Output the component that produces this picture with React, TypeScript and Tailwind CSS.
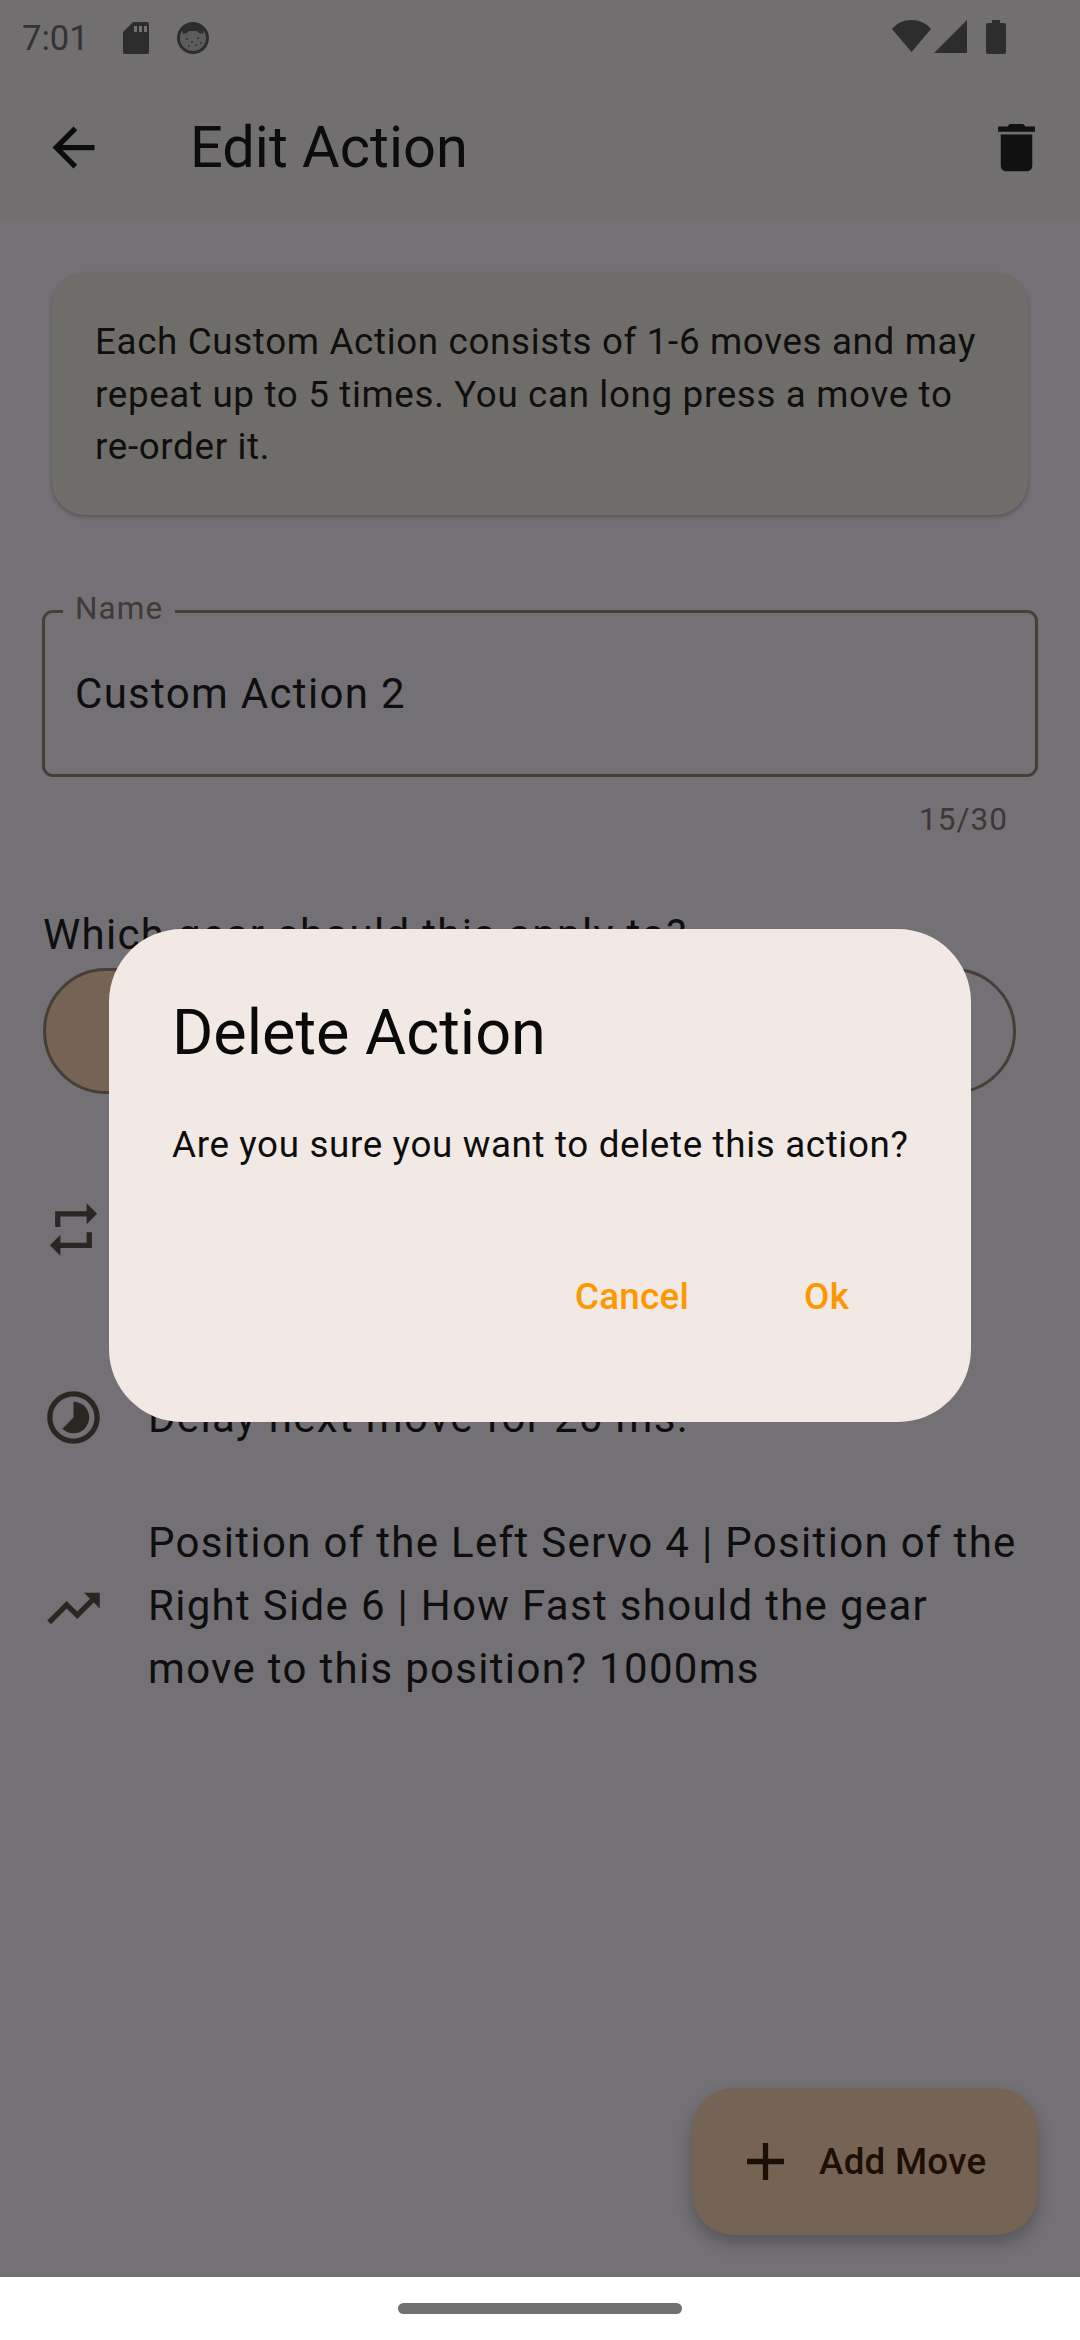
import type { ReactNode } from "react";

function Icon({ d, className }: { d: string; className?: string }) {
  return (
    <svg viewBox="0 0 24 24" fill="currentColor" className={className}>
      <path d={d} />
    </svg>
  );
}

const icons = {
  back: "M20 11H7.83l5.59-5.59L12 4l-8 8 8 8 1.41-1.41L7.83 13H20v-2z",
  trash: "M6 19c0 1.1.9 2 2 2h8c1.1 0 2-.9 2-2V7H6v12zM19 4h-3.5l-1-1h-5l-1 1H5v2h14V4z",
  repeat: "M7 7h10v3l4-4-4-4v3H5v6h2V7zm10 10H7v-3l-4 4 4 4v-3h12v-6h-2v4z",
  timelapse:
    "M16.24 7.76C15.07 6.59 13.54 6 12 6v6l-4.24 4.24c2.34 2.34 6.14 2.34 8.49 0 2.34-2.34 2.34-6.14-.01-8.48zM12 2C6.48 2 2 6.48 2 12s4.48 10 10 10 10-4.48 10-10S17.52 2 12 2zm0 18c-4.42 0-8-3.58-8-8s3.58-8 8-8 8 3.58 8 8-3.58 8-8 8z",
  trending: "M16 6l2.29 2.29-4.88 4.88-4-4L2 16.59 3.41 18l6-6 4 4 6.3-6.29L22 12V6z",
  add: "M19 13h-6v6h-2v-6H5v-2h6V5h2v6h6v2z",
};

function StatusBar() {
  return (
    <div className="flex h-[72px] items-start bg-[#716f70] pl-[22px] pr-[74px] pt-[15px] text-[#333333]">
      <span className="text-[34.5px] leading-[46px]">7:01</span>
      <svg viewBox="0 0 26 32" fill="currentColor" className="ml-[34px] mt-[7px] h-[32px] w-[26px] text-[#2d2d2d]">
        <path d="M10 0h14a2 2 0 0 1 2 2v28a2 2 0 0 1-2 2H2a2 2 0 0 1-2-2V10zM11 4v6h3V4zm5 0v6h3V4zm5 0v6h3V4z" fillRule="evenodd" />
      </svg>
      <svg viewBox="0 0 32 32" className="ml-[28px] mt-[7px] h-[32px] w-[32px]">
        <circle cx="16" cy="16" r="14.5" fill="#5d5c5c" stroke="#2d2d2d" strokeWidth="3" />
        <path d="M5 8a14 14 0 0 1 22 0l-1 4-4-1-2-2h-8l-2 2-4 1z" fill="#2d2d2d" />
        <g fill="#333333">
          <circle cx="10" cy="17" r="1" />
          <circle cx="15" cy="20" r="1" />
          <circle cx="21" cy="16" r="1" />
          <circle cx="19" cy="23" r="1" />
          <circle cx="12" cy="24" r="1" />
          <circle cx="24" cy="21" r="1" />
        </g>
      </svg>
      <div className="ml-auto mt-[5px] flex items-start text-[#2d2d2d]">
        <svg viewBox="0 0 39 32" fill="currentColor" className="h-[32px] w-[39px]">
          <path d="M0 9C5 3 12 0 19.5 0S34 3 39 9L19.5 32z" />
        </svg>
        <svg viewBox="0 0 33 33" fill="currentColor" className="ml-[3px] h-[33px] w-[33px]">
          <path d="M33 0v33H0z" />
        </svg>
        <svg viewBox="0 0 20 34" fill="currentColor" className="ml-[19px] h-[34px] w-[20px]">
          <path d="M6 0h8v3h4a2 2 0 0 1 2 2v27a2 2 0 0 1-2 2H2a2 2 0 0 1-2-2V5a2 2 0 0 1 2-2h4z" />
        </svg>
      </div>
    </div>
  );
}

function MoveRow({ icon, height, iconClass, children }: { icon: string; height: string; iconClass?: string; children?: ReactNode }) {
  return (
    <div className={`flex items-center pr-[50px] ${height}`}>
      <Icon d={icon} className={`ml-[42px] h-[63px] w-[63px] shrink-0 text-[#2a2622] ${iconClass ?? ""}`} />
      <div className="ml-[43px] text-[42px] leading-[63px] tracking-[1.31px] text-[#0f0e0e]">{children}</div>
    </div>
  );
}

function DeleteDialog() {
  return (
    <div className="absolute left-[109px] top-[929px] h-[493px] w-[862px] rounded-[73px] bg-[#f2e9e4] pl-[63px] pt-[67px]">
      <h2 className="text-[63px] leading-[74px] text-[#0a0a0a]">Delete Action</h2>
      <p className="mt-[48px] text-[36.75px] leading-[54px] tracking-[0.656px] text-[#0e0d0d]">
        Are you sure you want to delete this action?
      </p>
      <div className="mt-[98px] flex gap-[115px] pl-[403px] text-[36.75px] font-medium leading-[54px] tracking-[0.26px] text-[#ff9800]">
        <button>Cancel</button>
        <button>Ok</button>
      </div>
    </div>
  );
}

export default function App() {
  return (
    <div className="relative flex h-[2340px] w-[1080px] flex-col overflow-hidden bg-[#737175] font-['Roboto',sans-serif]">
      <StatusBar />

      <header className="flex h-[150px] items-center bg-[#716f70] text-[#0c0c0c]">
        <Icon d={icons.back} className="ml-[42px] h-[63px] w-[63px]" />
        <h1 className="ml-[85px] text-[57.75px]">Edit Action</h1>
        <Icon d={icons.trash} className="ml-auto mr-[32px] h-[63px] w-[63px] text-[#111111]" />
      </header>

      <section className="mx-[52px] mt-[51px] h-[242px] rounded-[33px] bg-[#6e6d6a] pl-[43px] pt-[43px] pr-[30px] shadow-[0_2px_4px_rgba(0,0,0,0.28)]">
        <p className="text-[36.75px] leading-[52.5px] tracking-[0.656px] text-[#100f0e]">
          Each Custom Action consists of 1-6 moves and may repeat up to 5 times. You can long press a move to re-order it.
        </p>
      </section>

      <div className="relative mx-[42px] mt-[95px] flex h-[167px] items-center rounded-[11px] border-[3px] border-[#463f38] pl-[30px]">
        <span className="absolute -top-[24px] left-[18px] bg-[#737175] px-[12px] text-[31.5px] leading-[40px] tracking-[1.05px] text-[#3f3a35]">
          Name
        </span>
        <span className="text-[42px] leading-[56px] tracking-[1.31px] text-[#0f0e0e]">Custom Action 2</span>
      </div>
      <p className="mr-[72px] mt-[23px] self-end text-[31.5px] leading-[40px] tracking-[1.05px] text-[#3c3835]">15/30</p>

      <p className="ml-[43px] mt-[67px] text-[42px] leading-[56px] tracking-[1.31px] text-[#0f0e0e]">
        Which gear should this apply to?
      </p>
      <div className="mx-[43px] mr-[64px] mt-[5px] flex h-[126px] justify-between">
        <div className="w-[300px] rounded-full border-[3px] border-[#463f38] bg-[#756353]" />
        <div className="w-[300px] rounded-full border-[3px] border-[#463f38]" />
      </div>

      <div className="mt-[39px] flex flex-col">
        <MoveRow icon={icons.repeat} height="h-[192px]" />
        <MoveRow icon={icons.timelapse} height="h-[185px]">
          Delay next move for 20 ms.
        </MoveRow>
        <MoveRow icon={icons.trending} height="h-[190px]" iconClass="mt-[6px]">
          Position of the Left Servo 4 | Position of the Right Side 6 | How Fast should the gear move to this position? 1000ms
        </MoveRow>
      </div>

      <footer className="mt-auto flex h-[63px] shrink-0 items-center justify-center bg-white">
        <div className="h-[11px] w-[284px] rounded-full bg-[#737073]" />
      </footer>

      <button className="absolute left-[692px] top-[2088px] flex h-[147px] w-[346px] items-center rounded-[42px] bg-[#756353] pl-[55px] text-[#1c0f05] shadow-[0_8px_16px_rgba(0,0,0,0.25)]">
        <svg viewBox="5 5 14 14" fill="currentColor" className="h-[37px] w-[37px]">
          <path d={icons.add} />
        </svg>
        <span className="ml-[35px] text-[36.75px] font-medium tracking-[0.26px]">Add Move</span>
      </button>

      <DeleteDialog />
    </div>
  );
}
